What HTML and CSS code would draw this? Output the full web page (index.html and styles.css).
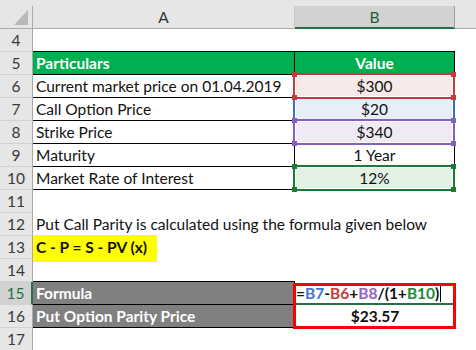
FILE: index.html
```html
<!DOCTYPE html>
<html>
<head>
<meta charset="utf-8">
<link rel="stylesheet" href="styles.css">
</head>
<body>
<div class="sheet">
  <div class="top"></div>
  <div class="row colhead">
    <div class="corner"><svg width="33" height="22" viewBox="0 0 33 22"><polygon points="28,4 28,19 14,19" fill="#b8b8b8"/></svg></div>
    <div class="cha">A</div>
    <div class="chb">B</div>
    <div class="chr"></div>
  </div>
  <div class="row">
    <div class="rh">4</div><div class="c a tb"></div><div class="c b tb"></div><div></div>
  </div>
  <div class="row">
    <div class="rh">5</div><div class="c a bd green">Particulars</div><div class="c b bd green">Value</div><div></div>
  </div>
  <div class="row">
    <div class="rh">6</div><div class="c a bd">Current market price on 01.04.2019</div>
    <div class="c b bd ref red">$300<div class="frame"></div></div><div></div>
  </div>
  <div class="row">
    <div class="rh">7</div><div class="c a bd">Call Option Price</div>
    <div class="c b bd ref blue">$20<div class="frame"></div></div><div></div>
  </div>
  <div class="row">
    <div class="rh">8</div><div class="c a bd">Strike Price</div>
    <div class="c b bd ref purple">$340<div class="frame"></div></div><div></div>
  </div>
  <div class="row">
    <div class="rh">9</div><div class="c a bd">Maturity</div>
    <div class="c b bd">1 Year</div><div></div>
  </div>
  <div class="row">
    <div class="rh">10</div><div class="c a bd">Market Rate of Interest</div>
    <div class="c b bd ref grn">12%<div class="frame"></div></div><div></div>
  </div>
  <div class="row">
    <div class="rh">11</div><div class="c a"></div><div class="c b"></div><div></div>
  </div>
  <div class="row">
    <div class="rh">12</div><div class="c a">Put Call Parity is calculated using the formula given below</div><div class="c b"></div><div></div>
  </div>
  <div class="row">
    <div class="rh">13</div><div class="c anopad"><div class="yellow">C - P = S - PV (x)</div></div><div class="c b"></div><div></div>
  </div>
  <div class="row">
    <div class="rh">14</div><div class="c a tb"></div><div class="c b"></div><div></div>
  </div>
  <div class="row">
    <div class="rh sel">15</div><div class="c a bd gray">Formula</div>
    <div class="c fx">=<span class="t-blue">B7</span>-<span class="t-red">B6</span>+<span class="t-purple">B8</span>/(1+<span class="t-green">B10</span>)<span class="caret"></span><div class="redbox"></div></div><div></div>
  </div>
  <div class="row">
    <div class="rh">16</div><div class="c a bd gray">Put Option Parity Price</div>
    <div class="c b bold">$23.57</div><div></div>
  </div>
  <div class="row">
    <div class="rh">17</div><div class="c a"></div><div class="c b"></div><div></div>
  </div>
</div>
</body>
</html>
```
FILE: styles.css
```css
* { box-sizing: border-box; }
body { margin: 0; background: #fff; font-family: Lato, "Open Sans", sans-serif; }
.sheet { width: 476px; height: 350px; overflow: hidden; background: #fff; }
.top { height: 6px; background: #e6e6e6; }
.row { display: grid; grid-template-columns: 33px 262px 160px 21px; height: 23px; }
.row > div { height: 23px; line-height: 22px; font-size: 15.5px; white-space: nowrap; color: #111; }

.colhead > div { background: #e6e6e6; border-bottom: 1px solid #ababab; text-align: center; color: #333; }
.colhead .corner { border-right: 1px solid #ababab; }
.corner svg { display: block; }
.colhead .cha { border-right: 1px solid #c8c8c8; }
.colhead .chb { background: #d2d2d2; border-bottom: 2px solid #217346; border-right: 1px solid #a0a0a0; color: #1f5c38; }

.rh { background: #e6e6e6; border-right: 1px solid #a8a8a8; border-bottom: 1px solid #d2d2d2; text-align: center; color: #3a3a3a !important; }
.rh.sel { background: #d2d2d2; border-right: 2px solid #217346; color: #217346 !important; }

.a { padding-left: 3px; }
.anopad { padding: 0; }
.b { text-align: center; }
.bold { font-weight: 700; }
.tb { border-bottom: 1px solid #000; }
.bd { border-bottom: 1px solid #000; border-right: 1px solid #000; }
.row > .green { background: #00b050; color: #fff; font-weight: 700; }
.row > .gray { background: #808080; color: #fff; font-weight: 700; }

.yellow { margin-top: -1px; height: 27px; width: 124px; background: #ffff00; padding-left: 3px; line-height: 25px; font-weight: 700; color: #111; }

.ref { position: relative; }
.frame { position: absolute; left: -2px; top: -2px; width: 162px; height: 26px; border: 2px solid var(--c); box-shadow: inset 0 0 0 1px #fff; z-index: var(--z); }
.frame::before, .frame::after { content: ""; position: absolute; left: -3px; width: 5px; height: 5px; background: var(--c); box-shadow: 159px 0 0 var(--c); }
.frame::before { top: -3px; }
.frame::after { top: 20px; }
.row > .red { background: #f8e9e9; --c: #c4393f; --z: 2; }
.row > .blue { background: #e8eef8; --c: #3b6fc6; --z: 1; }
.row > .purple { background: #efeaf6; --c: #8660c0; --z: 3; }
.row > .grn { background: #e3f0e4; --c: #1b7b33; --z: 4; }

.fx { position: relative; padding-left: 1px; font-weight: 700; border-bottom: 2px solid #217346; }
.t-blue { color: #3b74d4; }
.t-red { color: #c43c3c; }
.t-purple { color: #8f66c8; }
.t-green { color: #1d8a3a; }
.caret { display: inline-block; width: 1px; height: 17px; background: #000; vertical-align: -3px; margin-left: 1px; }
.redbox { position: absolute; left: -2px; top: 1px; width: 163px; height: 46px; border: 3px solid #ff0000; z-index: 5; }
```
